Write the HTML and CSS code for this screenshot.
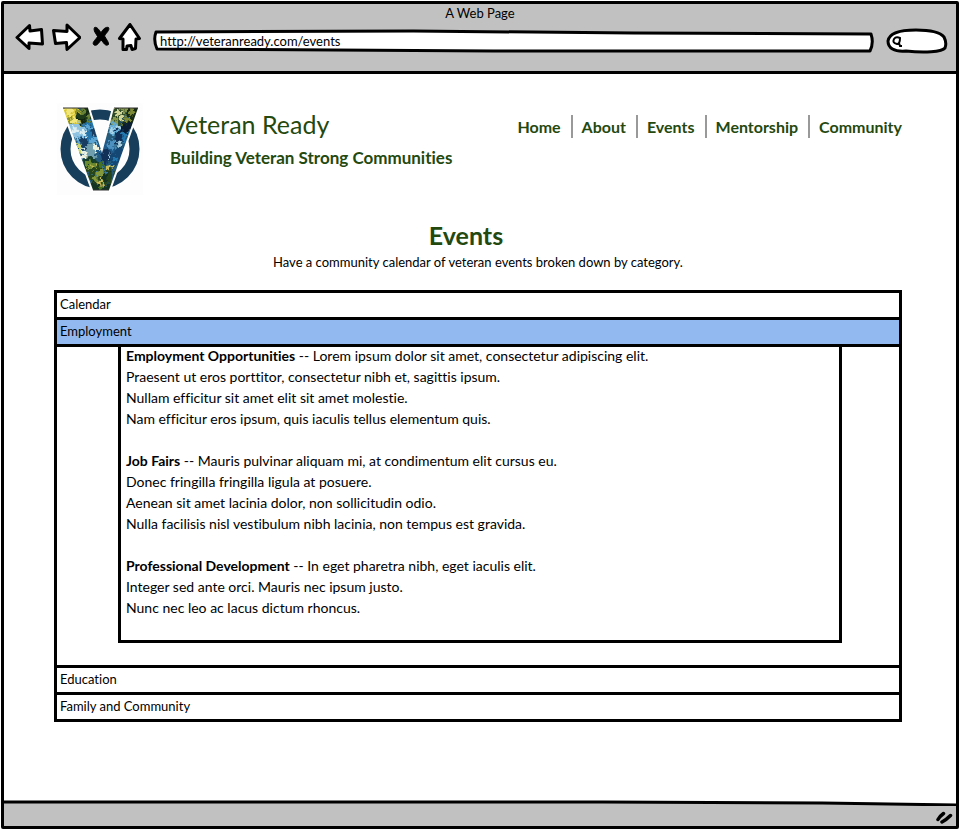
FILE: index.html
```
<!DOCTYPE html>
<html lang="en">
<head>
<meta charset="utf-8">
<title>Veteran Ready - Events</title>
<link rel="stylesheet" href="styles.css">
</head>
<body>
<div class="window">
  <div class="chrome">
    <div class="window-title">A Web Page</div>
    <div class="toolbar">
      <div class="tools">
        <button class="tool" type="button" aria-label="Back"><svg width="30" height="30" viewBox="0 0 30 30"><path d="M2 14.500L14.500 2.500L15 8L26.500 6.500L27.500 21L14 20L14 25.500Z"/></svg></button>
        <button class="tool" type="button" aria-label="Forward"><svg width="30" height="30" viewBox="0 0 30 30"><path d="M2.500 7.500L16 8.500L16 2L29 14.500L16 26.500L15.500 19.500L4.500 20.500Z"/></svg></button>
        <button class="tool tool-stop" type="button" aria-label="Stop"><svg width="20" height="30" viewBox="0 0 20 30"><path class="ink" d="M3.500 4.500C6 3.500 8 7 10 9.500C12 6.500 14.500 3.500 17.500 4.500C19 7 15.500 9.500 13.500 13C15 16 18 19 17.500 21.500C14 24 12.500 19 10 17C7.500 20.500 5 24 2.500 21.500C1 19 5 16.500 6.500 13.500C5 10.500 2 7.500 3.500 4.500Z"/></svg></button>
        <button class="tool tool-home" type="button" aria-label="Home"><svg width="24" height="30" viewBox="0 0 24 30"><path d="M13 1.500L2.500 15.500L6 16L6 26.500L9.500 26.500L10 23L14 22.500L15 26.500L18.500 25.500L19 16L22.500 15.500Z"/></svg></button>
      </div>
      <label class="field address">
        <svg class="outline" viewBox="0 0 720 24" preserveAspectRatio="none"><path d="M3 3L260 2L480 4L717 5Q720 14 716 22L340 22L4 20Q0 11 3 3Z"/></svg>
        <input type="text" value="http://veteranready.com/events" aria-label="Address">
      </label>
      <label class="field search">
        <svg class="outline" viewBox="0 0 62 26" preserveAspectRatio="none"><path d="M2 13C3 6 12 2 30 2C44 2 54 4 58 9Q61 15 59 20C56 24 38 25 20 23C8 24 2 20 2 13Z"/></svg>
        <svg class="lens" width="13" height="14" viewBox="0 0 13 14"><path d="M4 5Q6 2 10 4Q10 10 7 10Q2 9 4 5M9 9L10 12L12 12"/></svg>
        <input type="search" aria-label="Search">
      </label>
    </div>
  </div>

  <main class="page">
    <header class="site-header">
      <svg class="logo" width="86" height="92" viewBox="57 103 86 92" role="img" aria-label="Veteran Ready logo">
        <defs>
          <clipPath id="letter"><path d="M63 108H88L102 153L114 108H138L109 190H93Z"/></clipPath>
          <filter id="dabs" x="-10%" y="-10%" width="120%" height="120%" color-interpolation-filters="sRGB">
            <feTurbulence type="fractalNoise" baseFrequency="0.25" numOctaves="2" seed="4"/>
            <feDisplacementMap in="SourceGraphic" scale="11" xChannelSelector="R" yChannelSelector="G"/>
          </filter>
        </defs>
        <path fill="#fdfdfd" d="M57 103h86v92h-86z"/>
        <circle cx="100" cy="149" r="34.500" fill="none" stroke="#173f5c" stroke-width="10"/>
        <path d="M63 108H88L102 153L114 108H138L109 190H93Z" fill="#fff" stroke="#fff" stroke-width="4"/>
        <g clip-path="url(#letter)">
          <g filter="url(#dabs)">
          <path fill="#255a78" d="M55 98h90v99H55z"/>
          <path fill="#d9c834" d="M56 99h20v6l5 7-4 7 5 5-6 4H60z"/>
          <path fill="#f0e67a" d="M64 109h7l3 5-5 3zM70 119l5-3 3 5-6 2z"/>
          <path fill="#8a9128" d="M66 116l5 1 2 7-5 2zM75 108l5 3-2 6-4-3z"/>
          <path fill="#203b19" d="M78 99h13l5 21-7 4-8-2-3-7 4-3z"/>
          <path fill="#668036" d="M81 108l4 3-2 4-4-3zM86 115l5-1 1 6-5 1z"/>
          <path fill="#122611" d="M84 103l5 4 2 7-5-1zM78 118l6 1-1 5-5-1z"/>
          <path fill="#8fc3df" d="M66 127l10-4 8 3 4 7-5 6-10-1z"/>
          <path fill="#dceef1" d="M71 128l6-1 2 4-5 4zM82 129l5 3-3 4-4-3zM77 145l7 4 3 9-6-2z"/>
          <path fill="#2476ad" d="M83 122l9-2 4 11 2 9-8 4-6-6 4-5z"/>
          <path fill="#5da5d2" d="M87 124l5 2-2 5-5-2zM90 137l6-1 1 6-4 3zM76 136l6 2-2 6-5-1z"/>
          <path fill="#183d61" d="M91 128l4 2 2 7-5-1zM79 139l6-2 4 7-6 4z"/>
          <path fill="#c8d36c" d="M74 142l5 1 4 10-2 4z"/>
          <path fill="#719fae" d="M85 146l8-3 5 6-4 8-7 1z"/>
          <path fill="#f0f4df" d="M82 151l4 1 3 8-5-2zM95 145l4 3-2 4-4-2z"/>
          <path fill="#163e2b" d="M82 158l10-1 7 5-1 7-13 1z"/>
          <path fill="#6b892f" d="M86 162l6-2 5 4-4 5-7-2z"/>
          <path fill="#c4bf52" d="M86 169l5-2 3 6-5 3zM96 165l4 2-2 4-4-2z"/>
          <path fill="#1f5c8b" d="M98 142l8-4 3 9 6 2-3 13-8 2-6-8z"/>
          <path fill="#123158" d="M101 151l6-3 5 6-3 10-7-2zM116 129l8 2-1 12-8 1z"/>
          <path fill="#4d91c0" d="M107 142l7-2 2 7-7 3zM115 147l6 2-2 7-6-3z"/>
          <path fill="#a9cedf" d="M108 155l5-1-1 5-4 2zM119 141l4 2-3 4-4-2z"/>
          <path fill="#154775" d="M114 149l10-3-5 18-8 3-4-6z"/>
          <path fill="#2579b1" d="M113 158l5-2-1 5-6 3zM124 133l6-1-3 9-5 2z"/>
          <path fill="#2f4b25" d="M108 99h20v6l-2 11-6 9-10-1z"/>
          <path fill="#d1d598" d="M116 109l5-2-2 8-5 3zM121 114l4 2-3 5-4-1z"/>
          <path fill="#87974c" d="M112 117l5 1-2 6-5 2zM123 107l5 1-2 5-5-1z"/>
          <path fill="#182b14" d="M127 99h18l-12 24-11 1 5-8z"/>
          <path fill="#7e8b36" d="M131 108l5 1-3 5-5-2zM126 116l5 1-2 5-5 1z"/>
          <path fill="#64acd3" d="M110 124l6-2 3 5-5 8-7-1z"/>
          <path fill="#a8d3e6" d="M111 127l4 1-2 5-4-1zM118 124l5 1-2 5-4-1z"/>
          <path fill="#091e34" d="M122 124l13-2-6 11-9-1z"/>
          <path fill="#27461c" d="M86 170l14-4 14 3-4 14-18 2z"/>
          <path fill="#85993a" d="M98 169l6 1-1 6-7 1zM92 178l5-2 2 5-5 3z"/>
          <path fill="#153323" d="M102 174l8-3-4 10-6 1zM86 183l28 1-1 13H87z"/>
          <path fill="#c9bc59" d="M97 182l5-3 2 5-5 1zM107 166l5-1-2 5-4 1z"/>
          <path fill="#47731f" d="M100 162l6 2-2 5-6-2zM98 186l7-1-1 4-6 1z"/>
          <path fill="#397ba4" d="M96 172l3 1-2 4-4-1zM103 167l4 1-2 4-4-2z"/>
          </g>
        </g>
        <path d="M63 108H88M114 108H138M93 190H109" stroke="#333" fill="none"/>
      </svg>
      <div class="brand">
        <div class="site-name">Veteran Ready</div>
        <div class="tagline">Building Veteran Strong Communities</div>
      </div>
      <nav class="nav" aria-label="Main">
        <a href="#home">Home</a>
        <a href="#about">About</a>
        <a href="#events">Events</a>
        <a href="#mentorship">Mentorship</a>
        <a href="#community">Community</a>
      </nav>
    </header>

    <div class="intro">
      <h1>Events</h1>
      <p>Have a community calendar of veteran events broken down by category.</p>
    </div>

    <div class="accordion">
      <button class="row" type="button" aria-expanded="false">Calendar</button>
      <button class="row row-open" type="button" aria-expanded="true" aria-controls="employment">Employment</button>
      <div class="panel" id="employment">
        <div class="listing">
          <p><strong>Employment Opportunities</strong> -- Lorem ipsum dolor sit amet, consectetur adipiscing elit.<br>
          Praesent ut eros porttitor, consectetur nibh et, sagittis ipsum.<br>
          Nullam efficitur sit amet elit sit amet molestie.<br>
          Nam efficitur eros ipsum, quis iaculis tellus elementum quis.</p>
          <p><strong>Job Fairs</strong> -- Mauris pulvinar aliquam mi, at condimentum elit cursus eu.<br>
          Donec fringilla fringilla ligula at posuere.<br>
          Aenean sit amet lacinia dolor, non sollicitudin odio.<br>
          Nulla facilisis nisl vestibulum nibh lacinia, non tempus est gravida.</p>
          <p><strong>Professional Development</strong> -- In eget pharetra nibh, eget iaculis elit.<br>
          Integer sed ante orci. Mauris nec ipsum justo.<br>
          Nunc nec leo ac lacus dictum rhoncus.</p>
        </div>
      </div>
      <button class="row" type="button" aria-expanded="false">Education</button>
      <button class="row" type="button" aria-expanded="false">Family and Community</button>
    </div>
  </main>

  <footer class="status">
    <svg class="edge" viewBox="0 0 954 6" preserveAspectRatio="none"><path fill="#fff" d="M0 0H954V4L820 2L600 1H0Z"/><path d="M0 2H600L820 3L954 5" fill="none" stroke="#000" stroke-width="3"/></svg>
    <svg class="grip" width="18" height="16" viewBox="0 0 18 16"><path d="M2 10.500Q4 7 7.500 4.500M6 13Q10 11 14.500 6.500" fill="none" stroke="#000" stroke-width="3.500" stroke-linecap="round"/></svg>
  </footer>
</div>
</body>
</html>
```
FILE: styles.css
```
* {
  box-sizing: border-box;
}

body {
  margin: 0;
  background: #fff;
  color: #000;
  font: 13px/21px "Lato", "Liberation Sans", sans-serif;
  font-variant-ligatures: none;
}

button,
input {
  font: inherit;
  font-variant-ligatures: none;
  color: inherit;
}

p {
  margin: 0;
}

.window {
  display: flex;
  flex-direction: column;
  min-height: calc(100vh - 2px);
  margin: 1px;
  border: 3px solid #000;
  border-radius: 2px;
}

.chrome {
  height: 70px;
  background: #c1c1c1;
  border-bottom: 3px solid #000;
}

.window-title {
  height: 18px;
  line-height: 18px;
  text-align: center;
}

.toolbar {
  display: flex;
  align-items: center;
  gap: 12px;
  padding: 0 8px 0 11px;
}

.tools {
  display: flex;
  gap: 6px;
}

.tool {
  display: block;
  padding: 0;
  border: 0;
  background: none;
}

.tool svg {
  display: block;
  fill: #fff;
  stroke: #000;
  stroke-width: 3;
  stroke-linejoin: round;
}

.tool-stop {
  margin-left: 4px;
}

.tool .ink {
  fill: #000;
  stroke-width: 1;
}

.field {
  position: relative;
  display: flex;
  align-items: center;
}

.outline {
  position: absolute;
  inset: 0;
  width: 100%;
  height: 100%;
  fill: #fff;
  stroke: #000;
  stroke-width: 3;
  stroke-linejoin: round;
}

.field input {
  position: relative;
  width: 100%;
  min-width: 0;
  height: 100%;
  padding: 0 7px;
  border: 0;
  background: none;
  outline: none;
}

.address {
  flex: 1;
  height: 24px;
  margin-top: 6px;
}

.search {
  width: 62px;
  height: 26px;
  margin-top: 6px;
}

.lens {
  position: relative;
  flex: none;
  margin-left: 4px;
  fill: none;
  stroke: #000;
  stroke-width: 2;
}

.page {
  flex: 1;
  padding: 29px 54px 20px 50px;
}

.site-header {
  display: flex;
  align-items: flex-start;
}

.logo {
  flex: none;
  margin-left: 3px;
}

.brand {
  margin-left: 27px;
  padding-top: 5px;
  color: #24490f;
}

.site-name {
  font-size: 25px;
  line-height: 32px;
}

.tagline {
  margin-top: 6px;
  font-size: 17px;
  line-height: 24px;
  font-weight: bold;
}

.nav {
  display: flex;
  margin-left: auto;
  padding-top: 12px;
}

.nav a {
  padding: 0 10px 0 9px;
  border-left: 2px solid #999;
  color: #24490f;
  font-size: 16px;
  line-height: 23px;
  font-weight: bold;
  text-decoration: none;
}

.nav a:first-child {
  border-left: 0;
}

.nav a:last-child {
  padding-right: 0;
}

.intro {
  margin-top: 24px;
  text-align: center;
}

h1 {
  margin: 0 0 1px;
  padding-right: 24px;
  color: #24490f;
  font-size: 25px;
  line-height: 32px;
}

.accordion {
  margin-top: 17px;
  border: 3px solid #000;
  border-bottom: 0;
}

.row {
  display: block;
  width: 100%;
  height: 27px;
  padding: 0 3px 2px;
  border: 0;
  border-bottom: 3px solid #000;
  background: #fff;
  line-height: 22px;
  text-align: left;
}

.row-open {
  background: #93b9f1;
}

.panel {
  padding: 0 57px 22px 61px;
  border-bottom: 3px solid #000;
}

/* The listing tucks under the border of the open row. */
.listing {
  margin-top: -2px;
  padding: 0 5px 22px;
  border: 3px solid #000;
  border-top: 0;
  font-size: 14px;
}

.listing p + p {
  margin-top: 21px;
}

.status {
  position: relative;
  display: flex;
  align-items: flex-end;
  justify-content: flex-end;
  height: 26px;
  padding: 0 2px 1px;
  background: #c1c1c1;
}

.edge {
  position: absolute;
  inset: 0 0 auto;
  width: 100%;
  height: 6px;
}
```
